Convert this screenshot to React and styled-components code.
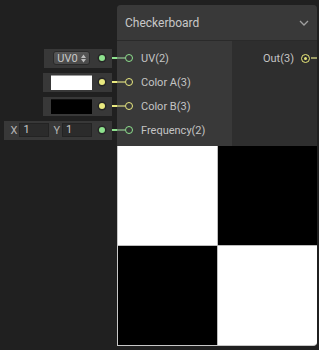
import React from 'react';
import styled, { createGlobalStyle } from 'styled-components';

const GlobalStyle = createGlobalStyle`
  html, body {
    margin: 0;
    padding: 0;
    background: #202020;
  }
  body {
    font-family: Roboto, "Noto Sans", sans-serif;
    color: #c4c4c4;
  }
`;

const Canvas = styled.div`
  width: 319px;
  height: 350px;
  overflow: hidden;
  background: #202020;
  display: flex;
  align-items: flex-start;
  padding-top: 5px;
  box-sizing: border-box;
`;

const Fields = styled.div`
  width: 117px;
  flex: none;
  display: flex;
  flex-direction: column;
  padding-top: 41px;
`;

const FieldRow = styled.div`
  height: 24px;
  display: flex;
  align-items: center;
  justify-content: flex-end;
`;

const FieldBox = styled.div`
  height: 19px;
  width: ${p => p.$width}px;
  background: #383838;
  display: flex;
  align-items: center;
  justify-content: flex-end;
  box-sizing: border-box;
  padding-right: 7px;
  gap: 7px;
`;

const Dot = styled.span`
  width: 6px;
  height: 6px;
  border-radius: 50%;
  background: ${p => p.$color};
  box-shadow: 0 0 0 1.5px #262626;
  flex: none;
`;

const Wire = styled.span`
  width: ${p => p.$width}px;
  height: 2px;
  background: ${p => p.$color};
  flex: none;
`;

const DropButton = styled.div`
  width: 37px;
  height: 14px;
  margin-right: 2px;
  border-radius: 3px;
  background: linear-gradient(#565656, #4a4a4a);
  border: 1px solid #2a2a2a;
  box-sizing: border-box;
  display: flex;
  align-items: center;
  justify-content: center;
  gap: 3px;
  font-size: 11px;
  color: #c8c8c8;
`;

const Swatch = styled.div`
  width: 41px;
  height: 15px;
  background: ${p => p.$color};
  border-top: 1px solid ${p => (p.$color === '#fff' ? '#9a9a9a' : '#111')};
  box-sizing: border-box;
`;

const VecGroup = styled.div`
  display: flex;
  align-items: center;
`;

const VecLabel = styled.span`
  font-size: 11px;
  color: #b4b4b4;
  margin: 0 2px 0 ${p => p.$gap}px;
`;

const VecInput = styled.div`
  width: 30px;
  height: 14px;
  background: #2b2b2b;
  border: 1px solid #232323;
  box-sizing: border-box;
  font-size: 11px;
  line-height: 12px;
  padding-left: 3px;
  color: #c8c8c8;
`;

const Node = styled.div`
  width: 200px;
  flex: none;
  border-radius: 4px;
  background: #2e2e2e;
  display: flex;
  flex-direction: column;
`;

const Header = styled.div`
  height: 36px;
  background: #393939;
  border-radius: 4px 4px 0 0;
  border-bottom: 1px solid #2a2a2a;
  box-sizing: border-box;
  display: flex;
  align-items: center;
  justify-content: space-between;
  padding: 0 8px;
  font-size: 12px;
  color: #c8c8c8;
`;

const Body = styled.div`
  display: flex;
  height: 105px;
`;

const Inputs = styled.div`
  width: 115px;
  background: #393939;
  padding-top: 5px;
  display: flex;
  flex-direction: column;
`;

const Outputs = styled.div`
  flex: 1;
  padding-top: 5px;
  display: flex;
  flex-direction: column;
  align-items: flex-end;
`;

const PortRow = styled.div`
  height: 24px;
  display: flex;
  align-items: center;
  font-size: 11px;
  color: #c4c4c4;
`;

const Port = styled.span`
  width: 8px;
  height: 8px;
  border-radius: 50%;
  border: 1.5px solid ${p => p.$color};
  box-sizing: border-box;
  flex: none;
  margin-right: 8px;
`;

const OutPort = styled.span`
  width: 9px;
  height: 9px;
  border-radius: 50%;
  border: 1.5px solid #e8e87a;
  box-sizing: border-box;
  display: flex;
  align-items: center;
  justify-content: center;
  margin-left: 7px;
  margin-right: 1px;
  &::after {
    content: '';
    width: 3px;
    height: 3px;
    border-radius: 50%;
    background: #e8e87a;
  }
`;

const Preview = styled.div`
  height: 200px;
  display: grid;
  grid-template-columns: 1fr 1fr;
  grid-template-rows: 1fr 1fr;
  background: #bdbdbd;
  border-left: 1px solid #c8c8c8;
  border-bottom: 1px solid #c8c8c8;
  border-radius: 0 0 4px 0;
  overflow: hidden;
  gap: 1px;
  box-sizing: border-box;
`;

const Cell = styled.div`
  background: ${p => (p.$dark ? '#000' : '#fff')};
`;

const GREEN = '#8ee28e';
const GREEN_DIM = '#6e8f6e';
const YELLOW = '#eaea80';
const YELLOW_DIM = '#9a9a64';

const Chevron = () => (
  <svg width="10" height="6" viewBox="0 0 10 6">
    <path d="M1 1 L5 5 L9 1" stroke="#a0a0a0" strokeWidth="1.3" fill="none" />
  </svg>
);

const Arrows = () => (
  <svg width="5" height="9" viewBox="0 0 5 9">
    <path d="M0 4 L2.5 0.5 L5 4 Z M0 5 L2.5 8.5 L5 5 Z" fill="#bbb" />
  </svg>
);

export default function App() {
  const ports = [
    { label: 'UV(2)', color: GREEN, dim: GREEN_DIM },
    { label: 'Color A(3)', color: YELLOW, dim: YELLOW_DIM },
    { label: 'Color B(3)', color: YELLOW, dim: YELLOW_DIM },
    { label: 'Frequency(2)', color: GREEN, dim: GREEN_DIM },
  ];

  return (
    <>
      <GlobalStyle />
      <Canvas>
        <Fields>
          <FieldRow>
            <FieldBox $width={68}>
              <DropButton>UV0<Arrows /></DropButton>
              <Dot $color={GREEN} />
            </FieldBox>
            <Wire $width={5} $color={GREEN} />
          </FieldRow>
          <FieldRow>
            <FieldBox $width={69}>
              <Swatch $color="#fff" />
              <Dot $color={YELLOW} />
            </FieldBox>
            <Wire $width={5} $color={YELLOW} />
          </FieldRow>
          <FieldRow>
            <FieldBox $width={69}>
              <Swatch $color="#000" />
              <Dot $color={YELLOW} />
            </FieldBox>
            <Wire $width={5} $color={YELLOW} />
          </FieldRow>
          <FieldRow>
            <FieldBox $width={108}>
              <VecGroup>
                <VecLabel $gap={0}>X</VecLabel>
                <VecInput>1</VecInput>
                <VecLabel $gap={4}>Y</VecLabel>
                <VecInput>1</VecInput>
              </VecGroup>
              <Dot $color={GREEN} />
            </FieldBox>
            <Wire $width={5} $color={GREEN} />
          </FieldRow>
        </Fields>
        <Node>
          <Header>
            <span>Checkerboard</span>
            <Chevron />
          </Header>
          <Body>
            <Inputs>
              {ports.map(p => (
                <PortRow key={p.label}>
                  <Wire $width={8} $color={p.dim} />
                  <Port $color={p.color} />
                  {p.label}
                </PortRow>
              ))}
            </Inputs>
            <Outputs>
              <PortRow>
                Out(3)
                <OutPort />
                <Wire $width={6} $color={YELLOW_DIM} />
              </PortRow>
            </Outputs>
          </Body>
          <Preview>
            <Cell />
            <Cell $dark />
            <Cell $dark />
            <Cell />
          </Preview>
        </Node>
      </Canvas>
    </>
  );
}
